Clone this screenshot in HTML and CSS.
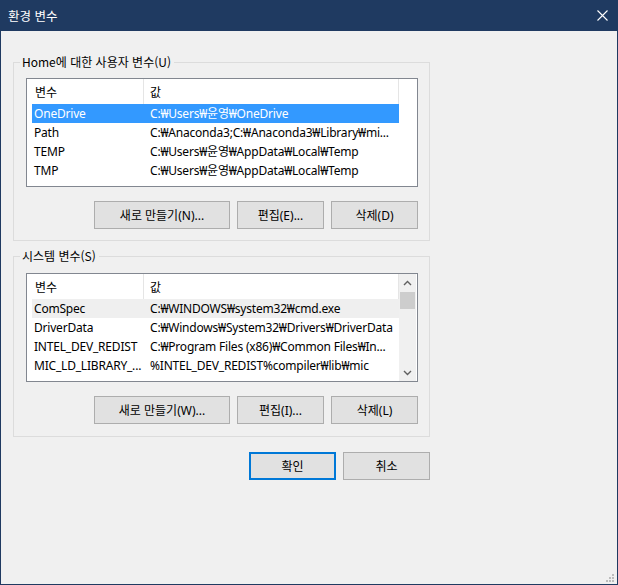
FILE: index.html
```html
<!DOCTYPE html>
<html lang="ko">
<head>
<meta charset="utf-8">
<title>환경 변수</title>
<link rel="stylesheet" href="styles.css">
</head>
<body>
<div class="window">
  <div class="titlebar">
    <span class="title">환경 변수</span>
    <svg class="close" width="11" height="11" viewBox="0 0 11 11"><path d="M0.5 0.5 L10.5 10.5 M10.5 0.5 L0.5 10.5" stroke="#ffffff" stroke-width="1.1" fill="none"/></svg>
  </div>
  <div class="content">
    <div class="group">
      <div class="legend"><span>Home에 대한 사용자 변수(U)</span></div>
      <div class="list">
        <div class="list-main">
          <div class="header"><div class="h h1">변수</div><div class="h h2">값</div></div>
          <div class="row selected"><div class="c c1">OneDrive</div><div class="c c2">C:₩Users₩윤영₩OneDrive</div></div>
          <div class="row"><div class="c c1">Path</div><div class="c c2">C:₩Anaconda3;C:₩Anaconda3₩Library₩mi...</div></div>
          <div class="row"><div class="c c1">TEMP</div><div class="c c2">C:₩Users₩윤영₩AppData₩Local₩Temp</div></div>
          <div class="row"><div class="c c1">TMP</div><div class="c c2">C:₩Users₩윤영₩AppData₩Local₩Temp</div></div>
        </div>
      </div>
      <div class="buttons">
        <div class="btn wide">새로 만들기(N)...</div>
        <div class="btn">편집(E)...</div>
        <div class="btn">삭제(D)</div>
      </div>
    </div>

    <div class="group group2">
      <div class="legend"><span>시스템 변수(S)</span></div>
      <div class="list">
        <div class="list-main">
          <div class="header"><div class="h h1">변수</div><div class="h h2">값</div></div>
          <div class="row inactive"><div class="c c1">ComSpec</div><div class="c c2">C:₩WINDOWS₩system32₩cmd.exe</div></div>
          <div class="row"><div class="c c1">DriverData</div><div class="c c2">C:₩Windows₩System32₩Drivers₩DriverData</div></div>
          <div class="row"><div class="c c1">INTEL_DEV_REDIST</div><div class="c c2">C:₩Program Files (x86)₩Common Files₩In...</div></div>
          <div class="row"><div class="c c1">MIC_LD_LIBRARY_...</div><div class="c c2">%INTEL_DEV_REDIST%compiler₩lib₩mic</div></div>
        </div>
        <div class="scrollbar">
          <div class="arrow">
            <svg width="9" height="6" viewBox="0 0 9 6"><path d="M1 5 L4.5 1.5 L8 5" stroke="#606060" stroke-width="1.4" fill="none"/></svg>
          </div>
          <div class="thumb"></div>
          <div class="track"></div>
          <div class="arrow">
            <svg width="9" height="6" viewBox="0 0 9 6"><path d="M1 1 L4.5 4.5 L8 1" stroke="#606060" stroke-width="1.4" fill="none"/></svg>
          </div>
        </div>
      </div>
      <div class="buttons">
        <div class="btn wide">새로 만들기(W)...</div>
        <div class="btn">편집(I)...</div>
        <div class="btn">삭제(L)</div>
      </div>
    </div>

    <div class="dialog-buttons">
      <div class="btn default">확인</div>
      <div class="btn">취소</div>
    </div>
  </div>
  <svg class="grip" width="9" height="9" viewBox="0 0 9 9">
    <rect x="6" y="0" width="2" height="2" fill="#bcbcbc"/>
    <rect x="3" y="3" width="2" height="2" fill="#bcbcbc"/>
    <rect x="6" y="3" width="2" height="2" fill="#bcbcbc"/>
    <rect x="0" y="6" width="2" height="2" fill="#bcbcbc"/>
    <rect x="3" y="6" width="2" height="2" fill="#bcbcbc"/>
    <rect x="6" y="6" width="2" height="2" fill="#bcbcbc"/>
  </svg>
</div>
</body>
</html>
```

FILE: styles.css
```css
* { box-sizing: border-box; }

html, body {
  margin: 0;
  padding: 0;
  background: #f0f0f0;
}

body {
  font-family: "Noto Sans", "Noto Sans CJK KR", sans-serif;
  font-size: 12px;
  color: #000;
}

.window {
  position: relative;
  width: 618px;
  height: 585px;
  background: #f0f0f0;
  display: flex;
  flex-direction: column;
}

.titlebar {
  height: 31px;
  flex: none;
  background: #1f3a61;
  display: flex;
  align-items: center;
  justify-content: space-between;
  padding: 0 10px 0 8px;
}

.title {
  color: #fff;
  font-size: 12.5px;
  line-height: 16px;
  font-family: "Noto Sans CJK KR", sans-serif;
}

.close { display: block; margin-top: 0; }

.content {
  flex: 1;
  border: 1px solid #1f3a61;
  border-top: 0;
  padding: 31px 0 0 12px;
}

.group {
  width: 417px;
  border: 1px solid #dcdcdc;
  padding: 0 11px 11px 12px;
}

.group2 {
  margin-top: 15px;
  padding-bottom: 12px;
}

.group2 .list { margin-top: 9px; }

.legend {
  height: 16px;
  margin-top: -9px;
  margin-left: -6px;
  line-height: 16px;
}

.legend span {
  display: inline-block;
  background: #f0f0f0;
  padding: 0 3px 0 2px;
  font-family: "Noto Sans CJK KR", sans-serif;
}

.list {
  margin-top: 8px;
  width: 392px;
  height: 109px;
  border: 1px solid #828790;
  background: #fff;
  display: flex;
}

.list-main {
  width: 372px;
  flex: none;
}

.header {
  display: flex;
  height: 25px;
  line-height: 25px;
}

.h {
  border-right: 1px solid #e5e5e5;
  font-family: "Noto Sans CJK KR", sans-serif;
}

.h1 { width: 117px; padding-left: 8px; }
.h2 { width: 255px; padding-left: 6px; }

.row {
  display: flex;
  height: 19px;
  line-height: 19px;
  margin-left: 5px;
  width: 367px;
  white-space: nowrap;
  letter-spacing: -0.2px;
}

.row.selected { background: #3399ff; color: #fff; }
.row.inactive { background: #efefef; }

.c { overflow: hidden; }
.c1 { width: 111px; padding-left: 2px; }
.c2 { width: 256px; padding-left: 7px; }

.scrollbar {
  width: 17px;
  flex: none;
  background: #f0f0f0;
  display: flex;
  flex-direction: column;
  align-items: center;
}

.arrow {
  width: 17px;
  height: 17px;
  flex: none;
  display: flex;
  align-items: center;
  justify-content: center;
}

.arrow svg { display: block; }

.thumb {
  width: 15px;
  height: 17px;
  margin-top: 1px;
  background: #cdcdcd;
  flex: none;
}

.track { flex: 1; }

.buttons {
  margin-top: 14px;
  display: flex;
  justify-content: flex-end;
  gap: 7px;
}

.btn {
  width: 87px;
  height: 28px;
  border: 1px solid #adadad;
  background: #e1e1e1;
  display: flex;
  align-items: center;
  justify-content: center;
  white-space: nowrap;
  font-family: "Noto Sans", "Noto Sans CJK KR", sans-serif;
}

.btn.wide { width: 136px; }

.btn.default {
  border: 2px solid #0078d7;
}

.dialog-buttons {
  width: 417px;
  margin-top: 15px;
  display: flex;
  justify-content: flex-end;
  gap: 7px;
}

.grip {
  position: absolute;
  right: 3px;
  bottom: 2px;
  display: block;
}
```
